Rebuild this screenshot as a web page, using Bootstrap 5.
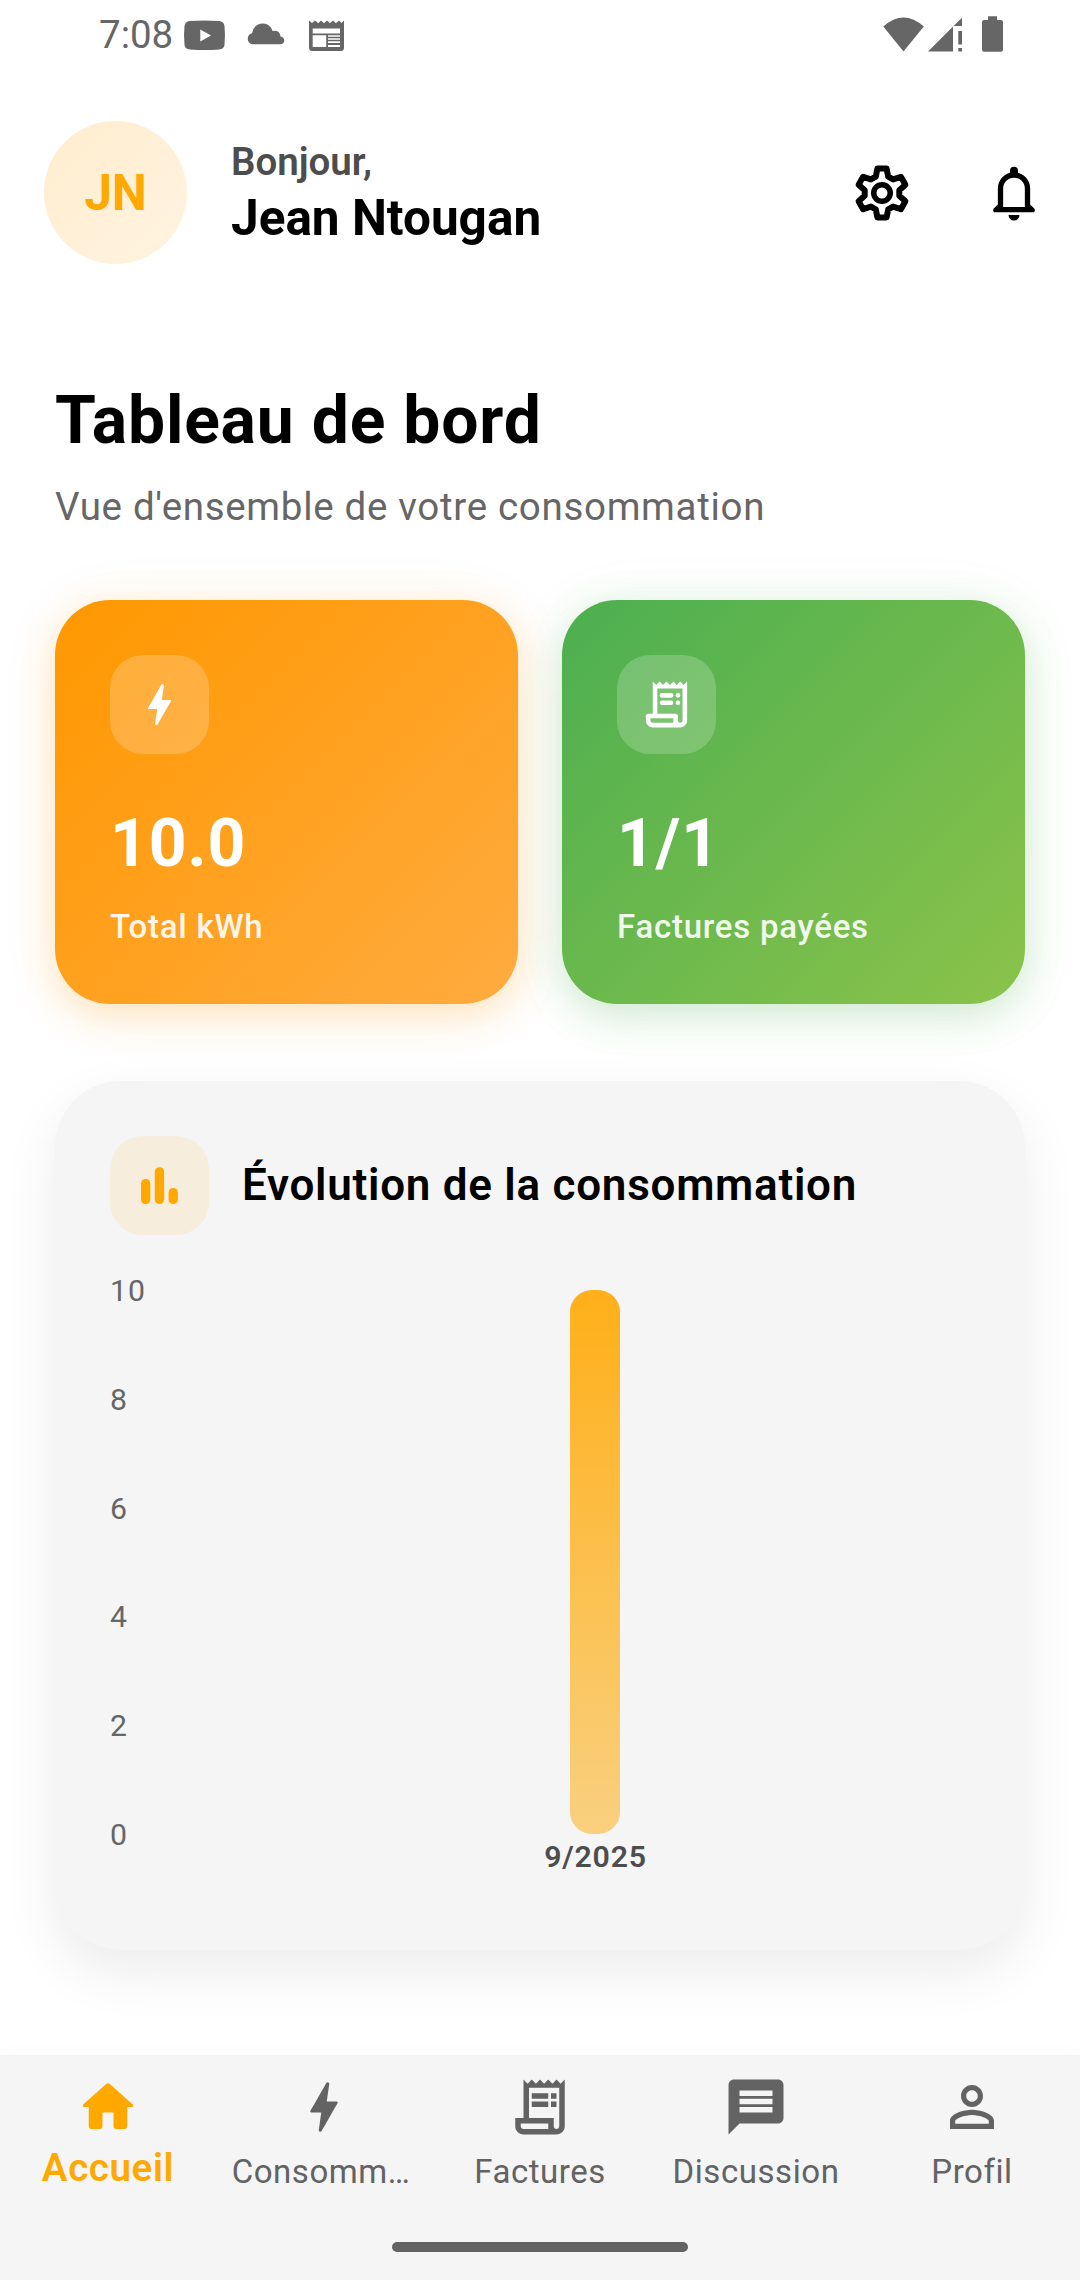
<!DOCTYPE html>
<html lang="fr">
<head>
<meta charset="utf-8">
<meta name="viewport" content="width=device-width, initial-scale=1">
<title>Tableau de bord</title>
<link href="https://cdn.jsdelivr.net/npm/bootstrap@5.3.0/dist/css/bootstrap.min.css" rel="stylesheet">
<style>
  body { font-family: Roboto, "Liberation Sans", sans-serif; background: #fff; color: #000; }
  svg { display: block; flex: none; }
  .screen { width: 1080px; height: 2280px; background: #fff; }
  .statusbar { height: 68px; padding: 0 76px 0 99px; color: #666; font-size: 38.5px; line-height: 68px; }
  .clock { padding-top: 1px; margin-bottom: -1px; }
  .topbar { height: 143px; margin-top: 53px; padding: 0 33px 0 44px; }
  .avatar { width: 143px; height: 143px; margin-right: 44px; padding-top: 2px; background: linear-gradient(135deg, #ffeccd, #fff4e1); color: #ffa800; font-size: 49.5px; font-weight: 700; line-height: 1; }
  .who { padding-bottom: 1px; }
  .hello { font-size: 38.5px; line-height: 52px; font-weight: 600; color: #4d4d4d; }
  .fullname { font-size: 49.5px; line-height: 60px; font-weight: 700; }
  .icons-gap { gap: 66px; }
  .page { padding: 117px 55px 0; }
  .page-title { font-size: 66px; line-height: 80px; font-weight: 700; letter-spacing: .8px; margin: 0; }
  .page-sub { font-size: 38.5px; line-height: 56px; letter-spacing: .69px; color: #666; margin: 18px 0 65px; }
  .stats { gap: 44px; }
  .stat { height: 404px; padding: 55px; border: 0; border-radius: 55px; color: #fff; }
  .stat-energy { background: linear-gradient(135deg, #ff9800, #ffab40); box-shadow: 0 6px 60px rgba(255,152,0,.08), 0 11px 40px rgba(255,152,0,.22); }
  .stat-bills { background: linear-gradient(135deg, #4caf50, #8bc34a); box-shadow: 0 6px 60px rgba(76,175,80,.08), 0 11px 40px rgba(76,175,80,.22); }
  .tile { width: 99px; height: 99px; border-radius: 33px; background: rgba(255,255,255,.2); }
  .tile-amber { background: #f6eddc; }
  .stat-value { font-size: 66px; line-height: 80px; font-weight: 700; letter-spacing: .9px; margin-top: 50px; }
  .stat-name { font-size: 33px; line-height: 44px; font-weight: 500; letter-spacing: .75px; margin-top: 21px; opacity: .9; }
  .panel { height: 869px; margin-top: 77px; padding: 55px; border: 0; border-radius: 66px; background: #f5f5f5; box-shadow: 0 22px 55px rgba(0,0,0,.08); }
  .panel-title { font-size: 44px; font-weight: 600; letter-spacing: .73px; margin: 0 0 2px 33px; line-height: 1; }
  .chart { margin-top: 55px; }
  .axis { width: 110px; height: 544px; font-size: 30.25px; letter-spacing: 1.1px; color: #666; }
  .axis span { height: 0; line-height: 2px; }
  .bar-fill { width: 50px; height: 544px; border-radius: 22px; background: linear-gradient(#ffaf19, #f9d07f); }
  .bar-date { font-size: 30.25px; line-height: 36px; margin-top: 5px; font-weight: 600; letter-spacing: .75px; padding-left: 1px; color: #4d4d4d; }
  .tabs { height: 225px; background: #f5f5f5; color: #636363; padding-top: 19px; box-shadow: 0 -3px 20px rgba(0,0,0,.02); }
  .tabs a { width: 216px; color: inherit; font-size: 33px; line-height: 46px; letter-spacing: .55px; }
  .tabs a span { margin-top: 9px; white-space: nowrap; }
  .tabs a .clipped { padding-right: 6px; }
  .tabs a.active { color: #ffa800; font-size: 38.5px; font-weight: 600; letter-spacing: .6px; }
  .tabs a.active span { margin-top: 5px; }
  .homebar { width: 296px; height: 10px; border-radius: 5px; background: #636363; margin-bottom: 28px; }
</style>
</head>
<body>
<div class="screen d-flex flex-column overflow-hidden">
  <div class="statusbar d-flex align-items-center justify-content-between">
    <div class="d-flex align-items-center">
      <span class="clock">7:08</span>
      <svg class="ms-2" width="166" height="68" viewBox="181 0 166 68" fill="currentColor">
        <path fill-rule="evenodd" d="M190 21Q204.500 20 219 21Q224 21.500 224.500 26Q225.500 35 224.500 45Q224 49.200 219 49.500Q204.500 50.500 190 49.500Q185 49.200 184.500 45Q183.500 35 184.500 26Q185 21.500 190 21ZM200.300 29.500V41.500L211 35.500Z"/>
        <path d="M252 44.300A5.700 5.700 0 0 1 252 33.300Q254 23.500 263 23.500Q270 23.500 272.500 31Q280 30 280.500 36.500Q284.500 37.500 284.300 41Q283.500 44.300 280 44.300Z"/>
        <path fill-rule="evenodd" d="M309 20.500L312 23L315 20.500L318.200 23.200L321 20.500L324 23.200L327 20.500L330 23.200L333 20.500L336 23.200L339 20.500L341.500 23L344 20.500V47.500Q344 51 341 51H312Q309 51 309 47.500ZM312.700 28.500V33.500H340V28.500ZM312.700 35.200V47H326.200V35.200ZM328 35.300V36.800H340V35.300ZM328 38.300V39.800H340V38.300ZM328 41.300V43H340V41.300ZM328 45V47H340V45Z"/>
      </svg>
    </div>
    <svg width="122" height="68" viewBox="882 0 122 68" fill="currentColor">
      <path d="M883.300 26.500Q903.500 8.500 923.800 26.500L903.500 51.500Z"/>
      <path d="M928 51.500L953 26.500V51.500ZM953.500 26L962 17.700V26ZM958.300 31H962V44.500H958.300ZM958.300 48H962V51.500H958.300Z"/>
      <path d="M988 16.300H997V20H1001Q1003 20 1003 22V49.500Q1003 51.700 1001 51.700H984Q982 51.700 982 49.500V22Q982 20 984 20H988Z"/>
    </svg>
  </div>

  <header class="topbar d-flex align-items-center">
    <div class="avatar rounded-circle d-flex align-items-center justify-content-center">JN</div>
    <div class="who">
      <div class="hello">Bonjour,</div>
      <div class="fullname">Jean Ntougan</div>
    </div>
    <div class="icons-gap d-flex ms-auto">
      <svg width="66" height="66" viewBox="-33 -33 66 66" fill="none" stroke="#000" stroke-width="5.500">
        <path stroke-linejoin="round" stroke-width="6" d="M-6.200 -16.400L-4.600 -24.400H4.600L6.200 -16.400L11.100 -13.600L18.900 -16.200L23.400 -8.300L17.300 -2.800V2.800L23.400 8.300L18.900 16.200L11.100 13.600L6.200 16.400L4.600 24.400H-4.600L-6.200 16.400L-11.100 13.600L-18.900 16.200L-23.400 8.300L-17.300 2.800V-2.800L-23.400 -8.300L-18.900 -16.200L-11.100 -13.600Z"/>
        <circle r="8.250"/>
      </svg>
      <svg width="66" height="66" viewBox="-33 -33 66 66">
        <path d="M-13.500 17V-4.500A13.500 13.500 0 0 1 13.500 -4.500V17" fill="none" stroke="#000" stroke-width="5.300"/>
        <path d="M-4 -17V-22.300A4 4 0 0 1 4 -22.300V-17ZM-16.200 11.500L-20 15.200Q-21.500 17 -20.500 18.400Q-20 19.300 -18.500 19.300H18.500Q20 19.300 20.500 18.400Q21.500 17 20 15.200L16.200 11.500V14H-16.200ZM-5.500 22H5.500A5.500 5.500 0 0 1 -5.500 22Z"/>
      </svg>
    </div>
  </header>

  <main class="page flex-grow-1">
    <h1 class="page-title">Tableau de bord</h1>
    <p class="page-sub">Vue d'ensemble de votre consommation</p>

    <div class="stats d-flex">
      <div class="card stat stat-energy flex-fill w-50">
        <div class="tile d-flex align-items-center justify-content-center">
          <svg width="55" height="55" viewBox="0 0 24 24" fill="#fff"><path d="M10.670 21c-.35 0-.62-.31-.57-.66L11 14H7.500c-.88 0-.33-.75-.31-.78 1.260-2.230 3.150-5.530 5.650-9.930.1-.18.3-.29.5-.29.35 0 .62.310.570.660L13.010 10h3.510c.4 0 .62.190.4.660-3.290 5.740-5.200 9.090-5.750 10.050-.1.180-.29.290-.5.290z"/></svg>
        </div>
        <div class="stat-value">10.0</div>
        <div class="stat-name">Total kWh</div>
      </div>
      <div class="card stat stat-bills flex-fill w-50">
        <div class="tile d-flex align-items-center justify-content-center">
          <svg width="55" height="55" viewBox="0 0 24 24" fill="#fff">
            <path fill-rule="evenodd" d="M19.500 3.500L18 2l-1.500 1.500L15 2l-1.500 1.500L12 2l-1.500 1.500L9 2 7.500 3.500 6 2v14H4c-.55 0-1 .45-1 1v2c0 1.660 1.340 3 3 3h12c1.660 0 3-1.340 3-3V2l-1.500 1.500zM15 20H6c-.55 0-1-.45-1-1v-1h10v2zM19 19c0 .55-.45 1-1 1s-1-.45-1-1v-2c0-.55-.45-1-1-1H8V5h11v14z"/>
            <rect x="9" y="7" width="6" height="2" rx="1"/><circle cx="17" cy="8" r="1"/>
            <rect x="9" y="10.200" width="6" height="2" rx="1"/><circle cx="17" cy="11.200" r="1"/>
          </svg>
        </div>
        <div class="stat-value">1/1</div>
        <div class="stat-name">Factures payées</div>
      </div>
    </div>

    <section class="card panel">
      <div class="d-flex align-items-center">
        <div class="tile tile-amber d-flex align-items-center justify-content-center">
          <svg width="55" height="55" viewBox="0 0 55 55" fill="#ffa800">
            <rect x="9" y="21" width="9.300" height="25" rx="4.500"/><rect x="22.800" y="9.300" width="9.300" height="36.700" rx="4.500"/><rect x="36.600" y="30" width="9.300" height="16" rx="4.500"/>
          </svg>
        </div>
        <h2 class="panel-title">Évolution de la consommation</h2>
      </div>
      <div class="chart d-flex">
        <div class="axis d-flex flex-column justify-content-between">
          <span>10</span><span>8</span><span>6</span><span>4</span><span>2</span><span>0</span>
        </div>
        <div class="flex-grow-1 d-flex flex-column align-items-center">
          <div class="bar-fill"></div>
          <div class="bar-date">9/2025</div>
        </div>
      </div>
    </section>
  </main>

  <nav class="tabs d-flex flex-column justify-content-between align-items-center">
    <div class="d-flex">
      <a class="active d-flex flex-column align-items-center text-decoration-none" href="#">
        <svg width="66" height="66" viewBox="0 0 24 24" fill="currentColor"><path d="M10 19v-5h4v5c0 .55.450 1 1 1h3c.55 0 1-.45 1-1v-7h1.700c.46 0 .68-.57.330-.87L12.670 3.600c-.38-.34-.96-.34-1.340 0l-8.360 7.530c-.34.3-.13.870.330.870H5v7c0 .55.450 1 1 1h3c.55 0 1-.45 1-1z"/></svg>
        <span>Accueil</span>
      </a>
      <a class="d-flex flex-column align-items-center text-decoration-none" href="#">
        <svg width="66" height="66" viewBox="0 0 24 24" fill="currentColor"><path d="M10.670 21c-.35 0-.62-.31-.57-.66L11 14H7.500c-.88 0-.33-.75-.31-.78 1.260-2.230 3.150-5.530 5.650-9.930.1-.18.3-.29.5-.29.35 0 .62.310.570.660L13.010 10h3.510c.4 0 .62.190.4.660-3.290 5.740-5.200 9.090-5.750 10.050-.1.180-.29.290-.5.290z"/></svg>
        <span class="clipped">Consomm…</span>
      </a>
      <a class="d-flex flex-column align-items-center text-decoration-none" href="#">
        <svg width="66" height="66" viewBox="0 0 24 24" fill="currentColor"><path fill-rule="evenodd" d="M19.500 3.500L18 2l-1.500 1.500L15 2l-1.500 1.500L12 2l-1.500 1.500L9 2 7.500 3.500 6 2v14H3v3c0 1.660 1.340 3 3 3h12c1.660 0 3-1.340 3-3V2l-1.500 1.500zM15 20H6c-.55 0-1-.45-1-1v-1h10v2zM19 19c0 .55-.45 1-1 1s-1-.45-1-1v-3H8V5h11v14z"/><path d="M9 7h6v2H9zM16 7h2v2h-2zM9 10h6v2H9zM16 10h2v2h-2z"/></svg>
        <span>Factures</span>
      </a>
      <a class="d-flex flex-column align-items-center text-decoration-none" href="#">
        <svg width="66" height="66" viewBox="0 0 24 24" fill="currentColor"><path d="M20 2H4c-1.100 0-1.990.9-1.990 2L2 22l4-4h14c1.100 0 2-.9 2-2V4c0-1.100-.9-2-2-2zm-2 12H6v-2h12v2zm0-3H6V9h12v2zm0-3H6V6h12v2z"/></svg>
        <span>Discussion</span>
      </a>
      <a class="d-flex flex-column align-items-center text-decoration-none" href="#">
        <svg width="66" height="66" viewBox="0 0 24 24" fill="currentColor"><path d="M12 5.900c1.160 0 2.100.94 2.100 2.100s-.94 2.100-2.100 2.100S9.900 9.160 9.900 8s.94-2.100 2.100-2.100m0 9c2.970 0 6.100 1.460 6.100 2.100v1.100H5.900V17c0-.64 3.130-2.100 6.100-2.100M12 4C9.790 4 8 5.790 8 8s1.790 4 4 4 4-1.790 4-4-1.790-4-4-4zm0 9c-2.670 0-8 1.340-8 4v3h16v-3c0-2.660-5.330-4-8-4z"/></svg>
        <span>Profil</span>
      </a>
    </div>
    <div class="homebar"></div>
  </nav>
</div>
<script src="https://cdn.jsdelivr.net/npm/bootstrap@5.3.0/dist/js/bootstrap.bundle.min.js"></script>
</body>
</html>
